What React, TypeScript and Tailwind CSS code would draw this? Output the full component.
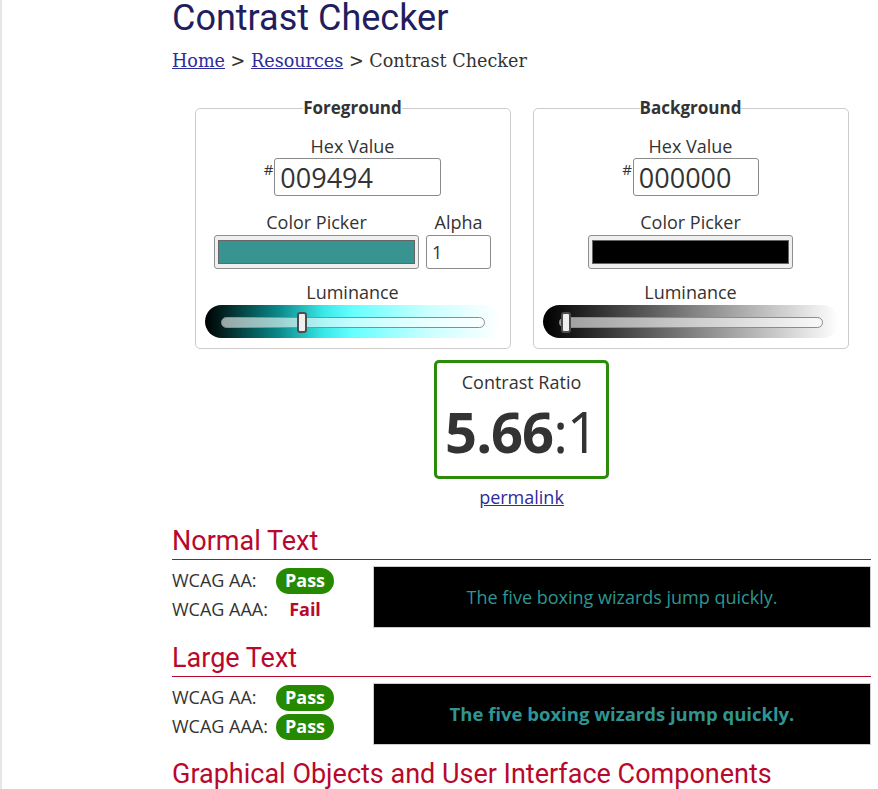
const body = { fontFamily: '"Open Sans", "DejaVu Sans", sans-serif' };
const head = { fontFamily: 'Roboto, "Liberation Sans", sans-serif' };

function Slider({ gradient, pos }: { gradient: string; pos: number }) {
  return (
    <div className="mx-auto h-[33px] w-[296px] rounded-full px-[16px] pt-[12px]" style={{ background: gradient }}>
      <div className="relative h-[11px] rounded-full border border-[#8c8c8c] bg-white/60">
        <div
          className="absolute top-[-6px] h-[21px] w-[10px] rounded-[3px] border-2 border-[#4d4d4d] bg-[#efefef]"
          style={{ left: pos }}
        />
      </div>
    </div>
  );
}

function Panel({
  title,
  hex,
  hexWidth,
  swatch,
  alpha,
  gradient,
  pos,
}: {
  title: string;
  hex: string;
  hexWidth: string;
  swatch: string;
  alpha?: boolean;
  gradient: string;
  pos: number;
}) {
  return (
    <fieldset className="w-[316px] rounded-[5px] border border-[#cccccc] px-[9px] pb-[10px] text-center">
      <legend className="mx-auto px-0 text-[17px] leading-[24px] font-bold text-[#333]">{title}</legend>
      <div className="mt-[15px] text-[18px] leading-[23px]">Hex Value</div>
      <div className="flex justify-center">
        <span className="mr-[1px] mt-[2px] text-[15px] leading-[18px]">#</span>
        <div className={`${hexWidth} h-[38px] rounded-[3px] border border-[#8a8a8a] pl-[5px] text-left text-[27px] leading-[37px]`}>
          {hex}
        </div>
      </div>
      <div className="mt-[15px] flex justify-center gap-[7px]">
        <div>
          <div className="text-[18px] leading-[23px]">Color Picker</div>
          <div className="mt-[1px] h-[34px] w-[205px] rounded-[3px] border border-[#8f8f8f] bg-[#efefef] px-[3px] py-[4px]">
            <div className="h-full border border-[#666]" style={{ background: swatch }} />
          </div>
        </div>
        {alpha && (
          <div>
            <div className="text-[18px] leading-[23px]">Alpha</div>
            <div className="mt-[1px] h-[34px] w-[65px] rounded-[3px] border border-[#8a8a8a] pl-[5px] text-left text-[18px] leading-[32px]">
              1
            </div>
          </div>
        )}
      </div>
      <div className="mt-[12px] text-[18px] leading-[23px]">Luminance</div>
      <div className="mt-[1px]">
        <Slider gradient={gradient} pos={pos} />
      </div>
    </fieldset>
  );
}

function Badge({ ok }: { ok: boolean }) {
  return ok ? (
    <span className="flex h-[26px] w-[58px] items-center justify-center rounded-full bg-[#258a00] text-[18px] font-bold text-white">
      Pass
    </span>
  ) : (
    <span className="flex h-[26px] w-[58px] items-center justify-center text-[18px] font-bold text-[#b8092c]">Fail</span>
  );
}

function Section({ title, aaa, bold }: { title: string; aaa: boolean; bold?: boolean }) {
  return (
    <section>
      <h2 className="pb-[2px] text-[27px] leading-[32px] text-[#b8092c]" style={head}>
        {title}
      </h2>
      <div className="h-px bg-[#b8092c]" />
      <div className="mt-[6px] flex">
        <div className="w-[201px] text-[18px]">
          <div className="flex h-[29px] items-center">
            <span className="w-[104px]">WCAG AA:</span>
            <Badge ok />
          </div>
          <div className="flex h-[29px] items-center">
            <span className="w-[104px]">WCAG AAA:</span>
            <Badge ok={aaa} />
          </div>
        </div>
        <div
          className={`flex h-[62px] flex-1 items-center justify-center border border-[#cccccc] bg-black text-[#2f9592] ${
            bold ? 'text-[18.5px] font-bold' : 'text-[18px]'
          }`}
        >
          The five boxing wizards jump quickly.
        </div>
      </div>
    </section>
  );
}

export default function App() {
  return (
    <div className="min-h-screen border-l-2 border-[#e6e6e6] bg-white text-[#333]" style={body}>
      <div className="ml-[170px] mr-[7px]">
        <h1 className="text-[36px] leading-none text-[#221d5e]" style={head}>
          Contrast Checker
        </h1>
        <p
          className="mt-[13px] text-[17.6px] leading-[24px]"
          style={{ fontFamily: '"DejaVu Serif", "Liberation Serif", serif' }}
        >
          <a className="text-[#2e2b9b] underline">Home</a> &gt; <a className="text-[#2e2b9b] underline">Resources</a> &gt;
          Contrast Checker
        </p>

        <div className="mt-[23px] flex justify-center gap-[22px]">
          <Panel
            title="Foreground"
            hex="009494"
            hexWidth="w-[167px]"
            swatch="#379491"
            alpha
            gradient="linear-gradient(to right, #000 0%, #0a8a8a 25%, #3ae8e8 40%, #66ffff 50%, #c8ffff 75%, #ffffff 100%)"
            pos={75}
          />
          <Panel
            title="Background"
            hex="000000"
            hexWidth="w-[126px]"
            swatch="#000000"
            gradient="linear-gradient(to right, #000 0%, #808080 50%, #ffffff 100%)"
            pos={1}
          />
        </div>

        <div className="mt-[11px] flex flex-col items-center">
          <div className="h-[119px] w-[175px] rounded-[5px] border-[3px] border-[#2a8c0a] pt-[8px] text-center">
            <div className="text-[18px] leading-[23px]">Contrast Ratio</div>
            <div className="mt-[9px] text-[56px] leading-[56px] tracking-[-1px]">
              <span className="font-bold">5.66</span>:1
            </div>
          </div>
          <a className="mt-[7px] text-[18px] leading-[22px] text-[#2e2b9b] underline">permalink</a>
        </div>

        <div className="mt-[17px]">
          <Section title="Normal Text" aaa={false} />
        </div>
        <div className="mt-[14px]">
          <Section title="Large Text" aaa bold />
        </div>
        <h2 className="mt-[13px] text-[27px] leading-[32px] text-[#b8092c]" style={head}>
          Graphical Objects and User Interface Components
        </h2>
      </div>
    </div>
  );
}
